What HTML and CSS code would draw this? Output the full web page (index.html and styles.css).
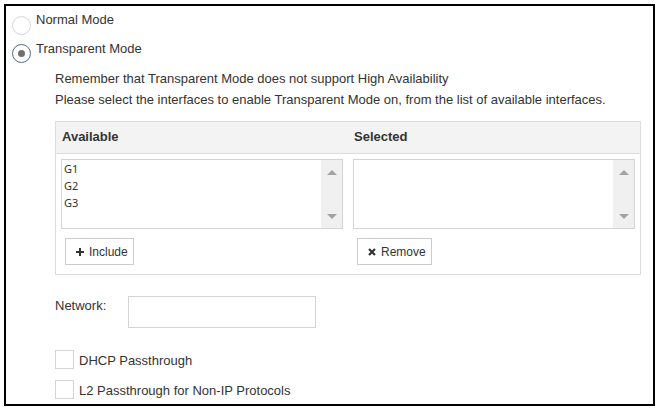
FILE: index.html
```html
<!DOCTYPE html>
<html>
<head>
<meta charset="utf-8">
<link rel="stylesheet" href="styles.css">
</head>
<body>
<div class="frame">
  <div class="mode-row first">
    <span class="radio"></span>
    <span class="mode-label">Normal Mode</span>
  </div>
  <div class="mode-row">
    <span class="radio checked"><span class="dot"></span></span>
    <span class="mode-label">Transparent Mode</span>
  </div>
  <div class="section">
    <p class="info">Remember that Transparent Mode does not support High Availability</p>
    <p class="info">Please select the interfaces to enable Transparent Mode on, from the list of available interfaces.</p>
    <div class="panel">
      <div class="panel-head">
        <div class="col-title">Available</div>
        <div class="col-title">Selected</div>
      </div>
      <div class="panel-body">
        <div class="col">
          <div class="listbox">
            <ul class="items">
              <li>G1</li>
              <li>G2</li>
              <li>G3</li>
            </ul>
            <div class="scroll"><span class="arrow up"></span><span class="arrow down"></span></div>
          </div>
          <button class="btn"><svg class="ico" width="8" height="8" viewBox="0 0 8 8"><path d="M4 0V8M0 4H8" stroke="#333" stroke-width="2"/></svg>Include</button>
        </div>
        <div class="col">
          <div class="listbox">
            <ul class="items"></ul>
            <div class="scroll"><span class="arrow up"></span><span class="arrow down"></span></div>
          </div>
          <button class="btn"><svg class="ico" width="8" height="8" viewBox="0 0 8 8"><path d="M1 1L7 7M7 1L1 7" stroke="#333" stroke-width="2.2"/></svg>Remove</button>
        </div>
      </div>
    </div>
    <div class="field-row">
      <label class="field-label">Network:</label>
      <input class="text-input" type="text">
    </div>
    <div class="check-row">
      <span class="checkbox"></span>
      <span class="check-label">DHCP Passthrough</span>
    </div>
    <div class="check-row second">
      <span class="checkbox"></span>
      <span class="check-label">L2 Passthrough for Non-IP Protocols</span>
    </div>
  </div>
</div>
</body>
</html>
```

FILE: styles.css
```css
html, body {
  margin: 0;
  padding: 0;
  background: #fff;
}
body {
  font-family: "Liberation Sans", Arial, sans-serif;
  font-size: 13px;
  color: #333;
}
.frame {
  margin: 4px;
  width: 651px;
  height: 402px;
  box-sizing: border-box;
  border: 2px solid #000;
  overflow: hidden;
}
.mode-row {
  display: flex;
  align-items: flex-start;
  padding-left: 6px;
  margin-top: 6px;
}
.radio {
  width: 19px;
  height: 19px;
  box-sizing: border-box;
  border: 1px solid #d6d6d6;
  border-radius: 50%;
  margin-top: 4px;
  margin-right: 5px;
  display: flex;
  align-items: center;
  justify-content: center;
  flex: none;
}
.radio.checked {
  border-color: #5a6a7a;
  margin-top: 3px;
}
.dot {
  width: 7px;
  height: 7px;
  border-radius: 50%;
  background: #6f6f6f;
}
.mode-label {
  line-height: 15px;
}
.section {
  margin-left: 49px;
}
.info {
  margin: 0;
  line-height: 21px;
}
.info:first-child {
  margin-top: 5px;
}
.panel {
  margin-top: 11px;
  width: 586px;
  box-sizing: border-box;
  border: 1px solid #ddd;
}
.panel-head {
  display: grid;
  grid-template-columns: 1fr 1fr;
  height: 32px;
  box-sizing: border-box;
  border-bottom: 1px solid #ddd;
  background: #f3f3f3;
}
.col-title {
  font-weight: bold;
  line-height: 30px;
  padding-left: 6px;
}
.panel-body {
  display: grid;
  grid-template-columns: 1fr 1fr;
  padding: 5px 0 9px;
}
.col {
  padding: 0 5px;
}
.listbox {
  display: flex;
  height: 70px;
  box-sizing: border-box;
  border: 1px solid #d4d4d4;
}
.items {
  flex: 1;
  list-style: none;
  margin: 0;
  padding: 0 0 0 2px;
  font-family: "Noto Sans", "DejaVu Sans", sans-serif;
  font-size: 11px;
  line-height: 17px;
  color: #333;
}
.scroll {
  width: 21px;
  background: #f0f0f0;
  display: flex;
  flex-direction: column;
  justify-content: space-between;
  align-items: center;
  padding: 10px 0 9px;
  box-sizing: border-box;
}
.arrow {
  width: 0;
  height: 0;
  border-left: 5px solid transparent;
  border-right: 5px solid transparent;
}
.arrow.up {
  border-bottom: 5px solid #a3a3a3;
}
.arrow.down {
  border-top: 5px solid #a3a3a3;
}
.btn {
  display: inline-flex;
  align-items: center;
  gap: 5px;
  height: 27px;
  margin: 9px 0 0 4px;
  padding: 0 5px 0 10px;
  box-sizing: border-box;
  border: 1px solid #ccc;
  border-radius: 0;
  background: #fff;
  font-family: "Liberation Sans", Arial, sans-serif;
  font-size: 12px;
  color: #333;
}
.ico {
  display: block;
}
.field-row {
  display: flex;
  align-items: flex-start;
  margin-top: 21px;
}
.field-label {
  width: 73px;
  line-height: 15px;
  margin-top: 2px;
}
.text-input {
  width: 188px;
  height: 32px;
  box-sizing: border-box;
  border: 1px solid #d4d4d4;
  margin: 0;
  padding: 0 6px;
}
.check-row {
  display: flex;
  align-items: flex-start;
  margin-top: 22px;
}
.check-row.second {
  margin-top: 11px;
}
.checkbox {
  width: 19px;
  height: 19px;
  box-sizing: border-box;
  border: 1px solid #d4d4d4;
  margin-right: 5px;
  flex: none;
}
.check-label {
  line-height: 15px;
  margin-top: 3px;
}
```
